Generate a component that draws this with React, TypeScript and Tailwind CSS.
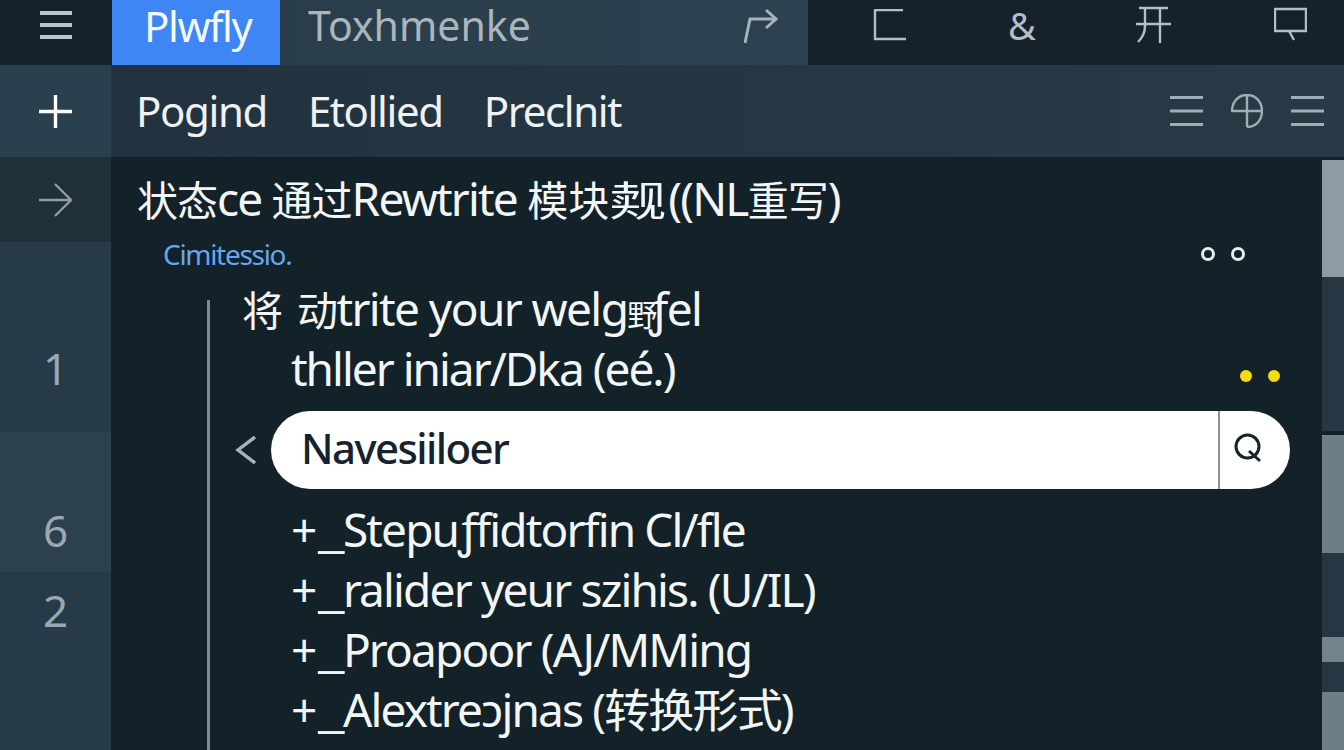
import React from "react";

const font = { fontFamily: '"Noto Sans", "Noto Sans CJK SC", sans-serif' };

function Ic({ w = 34, h = 34, children, className = "" }: { w?: number; h?: number; children: React.ReactNode; className?: string }) {
  return (
    <svg width={w} height={h} viewBox={`0 0 ${w} ${h}`} fill="none" stroke="currentColor" strokeWidth={2.4} className={className}>
      {children}
    </svg>
  );
}

function Lines({ w = 33, h = 26, stroke = 3 }: { w?: number; h?: number; stroke?: number }) {
  return (
    <Ic w={w} h={h}>
      <path d={`M0 ${stroke / 2}H${w}M0 ${h / 2}H${w}M0 ${h - stroke / 2}H${w}`} strokeWidth={stroke} />
    </Ic>
  );
}

const sideCells = [
  { h: "h-[85px]", bg: "bg-[#1f303b]", label: "arrow" },
  { h: "h-[190px]", bg: "bg-[#273a47]", label: "1" },
  { h: "h-[140px]", bg: "bg-[#2c404e]", label: "6" },
  { h: "flex-1", bg: "bg-[#273a47]", label: "2" },
];

const railCells = [
  "h-[3px] bg-[#132129]",
  "h-[117px] bg-[#8f9ba4]",
  "h-[154px] bg-[#263743]",
  "h-[4px] bg-[#132129]",
  "h-[118px] bg-[#6e7e87]",
  "h-[84px] bg-[#263743]",
  "h-[25px] bg-[#72838c]",
  "h-[30px] bg-[#263743]",
  "flex-1 bg-[#6e7e87]",
];

function ListRow({ children }: { children: React.ReactNode }) {
  return (
    <div className="h-[60px] flex items-center text-[46px] leading-none tracking-[-1.85px] text-[#f3f6f7] whitespace-nowrap">
      <span>
        <span className="tracking-[1px]">+</span>
        <span className="inline-block origin-left scale-x-[1.3] mr-[6px]">_</span>
        {children}
      </span>
    </div>
  );
}

export default function App() {
  return (
    <div className="w-[1344px] h-[750px] overflow-hidden flex flex-col bg-[#132129]" style={font}>
      {/* top bar */}
      <div className="h-[65px] flex shrink-0 bg-[#15222c]">
        <div className="w-[112px] flex items-center justify-center pb-[16px] text-[#b9c3c8]">
          <Lines w={32} h={28} stroke={4} />
        </div>
        <div className="w-[168px] bg-[#3f86f5] flex items-center pl-[32px] pb-[14px] text-[42px] tracking-[-1.4px] text-[#f4f8ff] leading-none">
          Plwfly
        </div>
        <div className="w-[528px] bg-gradient-to-r from-[#2a3d4a] to-[#2c4250] flex items-center pl-[28px] pr-[30px] pb-[14px] justify-between text-[41px] leading-none text-[#aab6bc]">
          <span>Toxhmenke</span>
          <Ic w={34} h={36} className="text-[#a7b3b9]">
            <path d="M1 35L6 11H30M22 2L32 11L22 20" strokeWidth={3} />
          </Ic>
        </div>
        <div className="flex-1 flex items-center pb-[16px] text-[#b4bfc5]">
          <div className="flex items-center pl-[65px] gap-[102px]">
            <Ic w={33} h={32}>
              <path d="M1 1H30M2 1V30H33" />
            </Ic>
            <span className="text-[38px] leading-none w-[24px]">&amp;</span>
            <Ic w={37} h={38} className="ml-[1px]">
              <path d="M4 2H33M1 18H36M10 2V20C10 27 7 32 3 36M25 2V37" />
            </Ic>
            <Ic w={33} h={36}>
              <path d="M1 2H32V24H1ZM15 24L20 33" />
            </Ic>
          </div>
        </div>
      </div>

      {/* second bar */}
      <div className="h-[92px] flex shrink-0 bg-gradient-to-r from-[#21323e] to-[#273a46]">
        <div className="w-[111px] bg-[#2b404e] flex items-center justify-center text-white">
          <Ic w={33} h={33}>
            <path d="M16.5 0V33M0 16.5H33" strokeWidth={3.4} />
          </Ic>
        </div>
        <div className="flex-1 flex items-center pl-[25px] pr-[20px] justify-between text-[#eef2f4]">
          <div className="flex items-center gap-[41px] text-[42px] leading-none tracking-[-1.4px]">
            <span>Pogind</span>
            <span>Etollied</span>
            <span>Preclnit</span>
          </div>
          <div className="flex items-center gap-[28px] text-[#9fadb5]">
            <Lines h={30} />
            <Ic w={32} h={34}>
              <path d="M16 33C26 33 31 25 31 17C31 8 25 1 16 1C7 1 1 8 1 17H31M16 1V33" />
            </Ic>
            <Lines h={30} />
          </div>
        </div>
      </div>

      {/* main */}
      <div className="flex-1 flex min-h-0">
        <div className="w-[111px] flex flex-col shrink-0">
          {sideCells.map((c) => (
            <div key={c.label} className={`${c.h} ${c.bg} flex justify-center text-[#9aa8b0] text-[44px] leading-none`}>
              {c.label === "arrow" ? (
                <Ic w={33} h={34} className="mt-[26px] text-[#8f9ca4]">
                  <path d="M0 17H32M16 1L32 17L16 33" />
                </Ic>
              ) : (
                <span className={c.label === "1" ? "mt-[104px]" : c.label === "6" ? "mt-[76px]" : "mt-[16px]"}>{c.label}</span>
              )}
            </div>
          ))}
        </div>

        <div className="flex-1 min-w-0 flex flex-col">
          <div className="pl-[26px]">
            <div className="h-[82px] flex items-center text-[46px] leading-none tracking-[-1.8px] text-[#f3f6f7] whitespace-nowrap">
              <span>
                <span className="text-[41px] tracking-[-1px]">状态</span>
                ce&nbsp;
                <span className="text-[41px] tracking-[-1px]">通过</span>
                Rewtrite&nbsp;
                <span className="text-[41px] tracking-[0px]">模块</span>
                <span className="inline-block w-[59px] origin-left scale-x-[1.4] text-[41px]">觌</span>
                ((NL
                <span className="text-[41px] tracking-[-1px]">重写</span>)
              </span>
            </div>
            <div className="h-[25px] mt-[2px] flex items-center justify-between">
              <span className="ml-[26px] text-[28px] leading-none tracking-[-1.3px] text-[#69a6f0]">Cimitessio.</span>
              <div className="flex gap-[16px] mr-[77px]">
                <span className="w-[14px] h-[14px] rounded-full border-[3px] border-[#e8ecee]" />
                <span className="w-[14px] h-[14px] rounded-full border-[3px] border-[#e8ecee]" />
              </div>
            </div>
          </div>

          <div className="flex-1 ml-[96px] mt-[34px] border-l-[3px] border-[#7f8b93] flex flex-col">
            <div className="h-[60px] flex items-center pl-[32px] text-[46px] leading-none tracking-[-1.6px] text-[#f3f6f7] whitespace-nowrap -mt-[22px]">
              <span>
                <span className="text-[41px] tracking-[14px]">将</span>
                <span className="text-[41px]">动</span>
                trite your welg
                <span className="text-[30px] tracking-[-8px]">野</span>
                ƒel
              </span>
            </div>
            <div className="h-[60px] flex items-center justify-between pl-[81px] pr-[42px] text-[46px] leading-none tracking-[-2px] text-[#f3f6f7] whitespace-nowrap">
              <span>thller iniar/Dka (eé.)</span>
              <div className="flex gap-[16px] mt-[16px]">
                <span className="w-[12px] h-[12px] rounded-full bg-[#f5dc0c]" />
                <span className="w-[12px] h-[12px] rounded-full bg-[#f5dc0c]" />
              </div>
            </div>
            <div className="flex items-center mt-[13px] pl-[25px]">
              <Ic w={22} h={28} className="text-[#a7b3b9] mr-[14px]">
                <path d="M20 1L3 14L20 27" strokeWidth={3.4} />
              </Ic>
              <div className="w-[1019px] h-[78px] rounded-full bg-white flex items-center overflow-hidden">
                <span className="flex-1 pl-[30px] pb-[4px] text-[42px] leading-none tracking-[-1.6px] text-[#16232c] font-medium">Navesiiloer</span>
                <div className="w-[72px] h-full border-l-2 border-[#8b9297] flex items-center pl-[14px] pb-[4px] text-[#17222a]">
                  <Ic w={28} h={30}>
                    <circle cx="13.5" cy="13.5" r="11.5" strokeWidth={3} />
                    <path d="M15 18L26 28" strokeWidth={3} />
                  </Ic>
                </div>
              </div>
            </div>
            <div className="pl-[81px] mt-[10px]">
              <ListRow>Stepuƒfidtorfin Cl/fle</ListRow>
              <ListRow>ralider yeur szihis. (U/IL)</ListRow>
              <ListRow>Proapoor (AJ/MMing</ListRow>
              <ListRow>Alextreɔjnas (转换形式)</ListRow>
            </div>
          </div>
        </div>

        <div className="w-[22px] flex flex-col shrink-0">
          {railCells.map((c, i) => (
            <div key={i} className={c} />
          ))}
        </div>
      </div>
    </div>
  );
}
